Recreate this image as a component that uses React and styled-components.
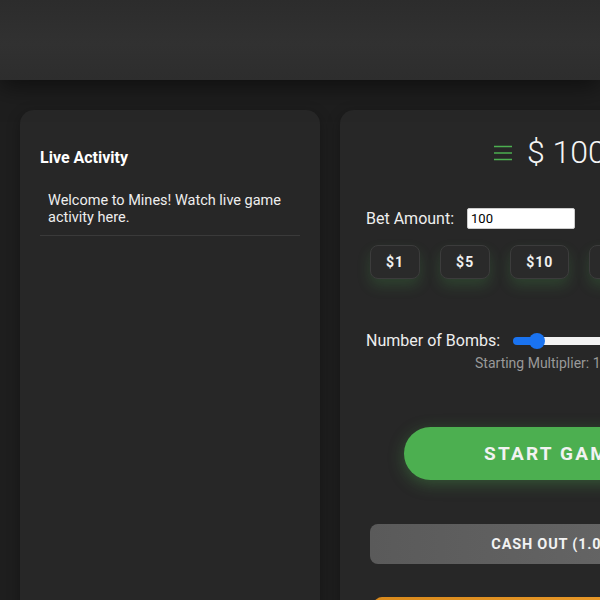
import { useState } from "react";
import styled, { createGlobalStyle } from "styled-components";

const GlobalStyle = createGlobalStyle`
  html, body {
    margin: 0;
    padding: 0;
    background: #1e1e1e;
    font-family: Roboto, "Liberation Sans", sans-serif;
    color: #eee;
    overflow: hidden;
  }
  * { box-sizing: border-box; }
`;

const BETS = [1, 5, 10, 25];

const App = () => {
  const [bet, setBet] = useState("100");
  const [bombs, setBombs] = useState(3);
  const fill = ((bombs - 1) / 23) * 100;

  return (
    <>
      <GlobalStyle />
      <StyledHeader />
      <StyledMain>
        <StyledActivity>
          <StyledTitle>Live Activity</StyledTitle>
          <StyledFeedItem>
            Welcome to Mines! Watch live game activity here.
          </StyledFeedItem>
        </StyledActivity>

        <StyledGame>
          <StyledBalance>
            <svg width="18" height="16" viewBox="0 0 18 16">
              <path
                d="M0 1.5h18M0 8h18M0 14.5h18"
                stroke="#4caf50"
                strokeWidth="1.3"
              />
            </svg>
            <span>$ 100.00</span>
          </StyledBalance>

          <StyledRow>
            <StyledLabel htmlFor="bet">Bet Amount:</StyledLabel>
            <StyledInput
              id="bet"
              type="text"
              value={bet}
              onChange={(e) => setBet(e.target.value)}
            />
          </StyledRow>

          <StyledChips>
            {BETS.map((b) => (
              <StyledChip key={b} onClick={() => setBet(String(b))}>
                ${b}
              </StyledChip>
            ))}
          </StyledChips>

          <StyledRow $top={52}>
            <StyledLabel htmlFor="bombs">Number of Bombs:</StyledLabel>
            <StyledSlider
              id="bombs"
              type="range"
              min="1"
              max="24"
              value={bombs}
              onChange={(e) => setBombs(Number(e.target.value))}
              style={{
                background: `linear-gradient(to right, #1a73f0 ${fill}%, #f2f2f2 ${fill}%)`,
              }}
            />
          </StyledRow>
          <StyledMultiplier>Starting Multiplier: 1.13x</StyledMultiplier>

          <StyledStart>START GAME</StyledStart>
          <StyledCashOut>CASH OUT (1.00x)</StyledCashOut>
          <StyledOrange>RANDOM TILE</StyledOrange>
        </StyledGame>
      </StyledMain>
    </>
  );
};

const StyledHeader = styled.header`
  height: 80px;
  background: linear-gradient(180deg, #2c2c2c 0%, #313131 55%, #2d2d2d 100%);
  box-shadow: 0 6px 24px rgba(0, 0, 0, 0.55);
  position: relative;
  z-index: 1;
`;
const StyledMain = styled.main`
  display: flex;
  gap: 20px;
  padding: 30px 20px 0;
  width: 900px;
  align-items: flex-start;
`;
const StyledPanel = styled.section`
  background: #272727;
  border-radius: 14px;
  box-shadow: 0 4px 14px rgba(0, 0, 0, 0.3);
  min-height: 560px;
`;
const StyledActivity = styled(StyledPanel)`
  width: 300px;
  padding: 38px 20px 20px;
`;
const StyledTitle = styled.h3`
  margin: 0 0 15px;
  font-size: 16px;
  font-weight: 700;
  color: #fff;
`;
const StyledFeedItem = styled.div`
  padding: 10px 8px 9px;
  font-size: 14.5px;
  line-height: 17px;
  color: #eee;
  border-bottom: 1px solid #3a3a3a;
`;
const StyledGame = styled(StyledPanel)`
  width: 440px;
  padding: 24px 30px 0;
  display: flex;
  flex-direction: column;
`;
const StyledBalance = styled.div`
  display: flex;
  align-items: center;
  gap: 15px;
  padding-left: 124px;
  font-size: 32px;
  font-weight: 300;
  color: #f5f5f5;
  height: 36px;
  white-space: nowrap;
  svg {
    margin-top: 2px;
    flex-shrink: 0;
  }
`;
const StyledRow = styled.div`
  display: flex;
  align-items: center;
  gap: 14px;
  margin-top: ${(p) => p.$top ?? 38}px;
  margin-left: -4px;
`;
const StyledLabel = styled.label`
  font-size: 16px;
  color: #eee;
  white-space: nowrap;
`;
const StyledInput = styled.input`
  width: 108px;
  height: 21px;
  margin-left: -1px;
  border: 1px solid #ccc;
  border-radius: 2px;
  padding: 1px 3px;
  font-family: Roboto, "Liberation Sans", sans-serif;
  font-size: 13px;
  color: #000;
  background: #fff;
`;
const StyledChips = styled.div`
  display: flex;
  gap: 20px;
  margin-top: 16px;
`;
const StyledChip = styled.button`
  height: 34px;
  padding: 0 15px;
  background: #2a2a2a;
  border: 1px solid #3c3c3c;
  border-radius: 8px;
  color: #f0f0f0;
  font-family: Roboto, "Liberation Sans", sans-serif;
  font-size: 14px;
  font-weight: 700;
  letter-spacing: 1px;
  box-shadow: 0 7px 14px rgba(76, 175, 80, 0.2);
  cursor: pointer;
`;
const StyledSlider = styled.input`
  appearance: none;
  -webkit-appearance: none;
  width: 200px;
  height: 8px;
  border-radius: 4px;
  margin: 0 0 0 -1px;
  outline: none;
  &::-webkit-slider-thumb {
    -webkit-appearance: none;
    width: 16px;
    height: 16px;
    border-radius: 50%;
    background: #1a73f0;
    cursor: pointer;
  }
`;
const StyledMultiplier = styled.div`
  text-align: center;
  margin-top: 5px;
  padding-right: 18px;
  font-size: 14px;
  color: #999;
  white-space: nowrap;
`;
const StyledStart = styled.button`
  align-self: center;
  width: 312px;
  height: 53px;
  margin-top: 56px;
  padding: 0 14px 0 0;
  border: none;
  border-radius: 27px;
  background: #4caf50;
  color: #f2f2f2;
  font-family: Roboto, "Liberation Sans", sans-serif;
  font-size: 19px;
  font-weight: 700;
  letter-spacing: 2.2px;
  white-space: nowrap;
  box-shadow: 0 4px 16px rgba(76, 175, 80, 0.35);
  cursor: pointer;
`;
const StyledCashOut = styled.button`
  height: 40px;
  margin-top: 44px;
  padding: 0 4px 0 0;
  border: none;
  border-radius: 8px;
  background: linear-gradient(90deg, #5a5a5a, #6a6a6a);
  color: #f2f2f2;
  font-family: Roboto, "Liberation Sans", sans-serif;
  font-size: 14.5px;
  font-weight: 700;
  letter-spacing: 0.8px;
  white-space: nowrap;
`;
const StyledOrange = styled.button`
  height: 40px;
  margin: 33px 0 0 4px;
  border: none;
  border-radius: 8px;
  background: linear-gradient(90deg, #d98a1c, #f0a030);
  color: #fff;
  font-family: Roboto, "Liberation Sans", sans-serif;
  font-size: 14px;
  font-weight: 700;
  letter-spacing: 1px;
`;

export default App;
